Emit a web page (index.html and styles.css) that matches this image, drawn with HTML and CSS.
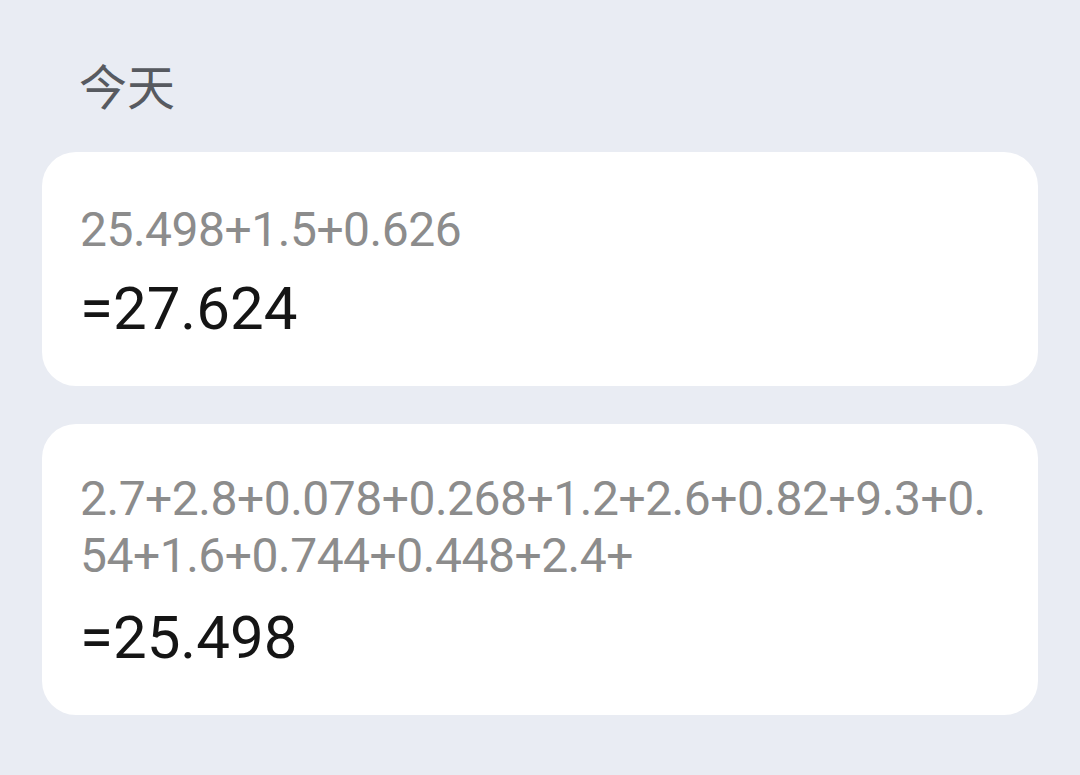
FILE: index.html
```html
<!DOCTYPE html>
<html lang="zh">
<head>
<meta charset="utf-8">
<title>计算历史</title>
<link rel="stylesheet" href="styles.css">
</head>
<body>
<main class="history">
  <h2 class="day">今天</h2>
  <section class="card">
    <div class="expr">25.498+1.5+0.626</div>
    <div class="result">=27.624</div>
  </section>
  <section class="card card-two">
    <div class="expr">2.7+2.8+0.078+0.268+1.2+2.6+0.82+9.3+0.54+1.6+0.744+0.448+2.4+</div>
    <div class="result">=25.498</div>
  </section>
</main>
</body>
</html>
```
FILE: styles.css
```css
html, body {
  margin: 0;
  padding: 0;
  background: #e9ecf3;
}
body {
  height: 775px;
  overflow: hidden;
  font-family: Roboto, "Noto Sans CJK SC", sans-serif;
}
.history {
  padding: 54px 42px 0 42px;
  display: flex;
  flex-direction: column;
}
.day {
  margin: 0 0 38px 37px;
  font-size: 48px;
  line-height: 60px;
  font-weight: 400;
  color: #575a60;
  font-family: "Noto Sans CJK SC", sans-serif;
}
.card {
  background: #ffffff;
  border-radius: 34px;
  padding: 49px 38px 42px 38px;
  display: flex;
  flex-direction: column;
  gap: 16px;
}
.card-two {
  margin-top: 38px;
  padding-top: 46px;
  gap: 19px;
}
.expr {
  font-size: 48px;
  line-height: 57px;
  letter-spacing: -0.5px;
  color: #8c8c8c;
  word-break: break-all;
}
.result {
  font-size: 60px;
  line-height: 70px;
  color: #151515;
}
```
